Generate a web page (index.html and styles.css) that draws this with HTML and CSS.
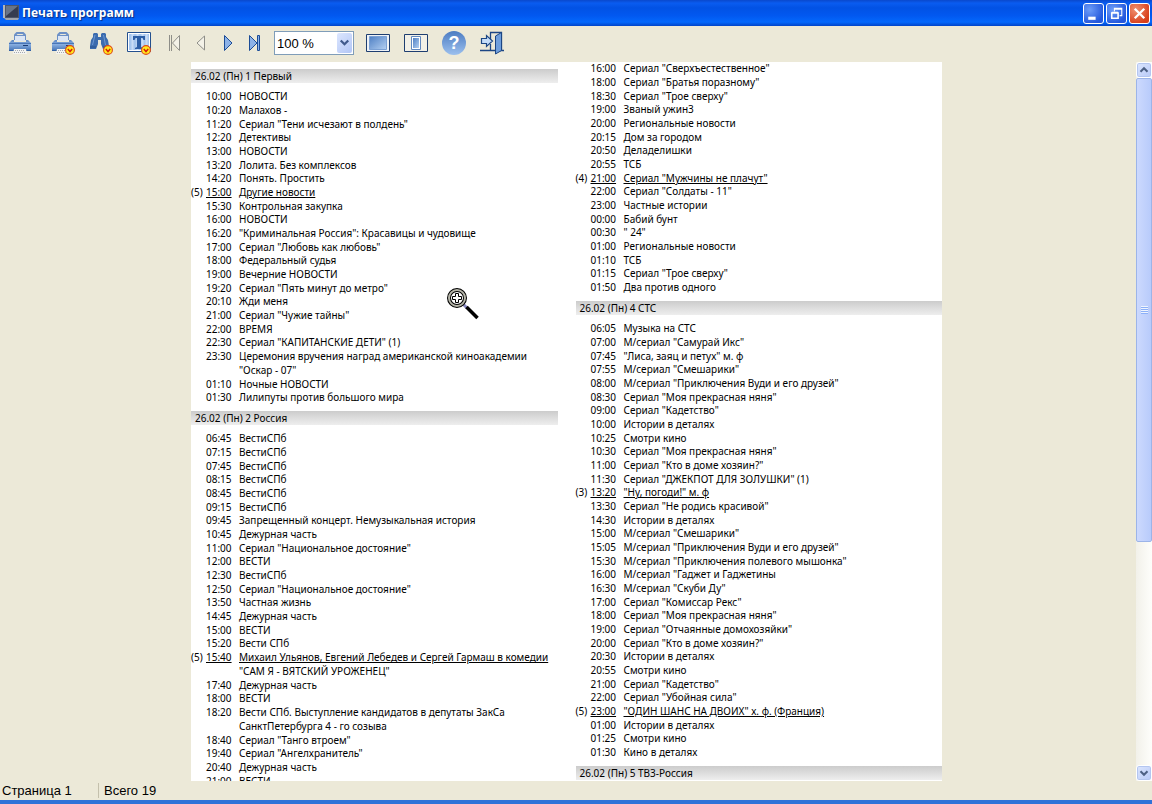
FILE: index.html
```html
<!DOCTYPE html>
<html lang="ru">
<head>
<meta charset="utf-8">
<title>Печать программ</title>
<link rel="stylesheet" href="styles.css">
</head>
<body>
<svg class="defs" aria-hidden="true">
  <defs>
    <linearGradient id="blue" x1="0" y1="0" x2="1" y2="1"><stop offset="0" stop-color="#4f80c4"/><stop offset="1" stop-color="#b4d0f2"/></linearGradient>
    <linearGradient id="blueV" x1="0" y1="0" x2="0" y2="1"><stop offset="0" stop-color="#5a86c4"/><stop offset="0.400" stop-color="#88aee0"/><stop offset="1" stop-color="#4070b4"/></linearGradient>
    <symbol id="printer" viewBox="0 0 24 24">
      <path d="M6 9V3.500L8.500 1h7L18 3.500V9z" fill="#6c90c6"/>
      <path d="M9.500 3h5l1 1h-7z" fill="#ece9d8"/>
      <path d="M7 5h10v5H7z" fill="#dce6f4"/>
      <path d="M1 12l3-3h2v2h12V9h2l3 3v8H1z" fill="url(#blueV)"/>
      <path d="M1 12.500h22" stroke="#4a76b6"/>
      <path d="M15 14.500h5" stroke="#1c3c74"/>
      <path d="M1 19.500h22" stroke="#3260a4"/>
      <path d="M6 18h12l1 5H5z" fill="#f4f4f0"/>
      <path d="M7 19.500h10M6 21.500h12" stroke="#a4aab4" stroke-dasharray="1 1"/>
    </symbol>
    <symbol id="badge" viewBox="0 0 10 10">
      <circle cx="5" cy="5" r="4.400" fill="#ffe81c" stroke="#e04a14" stroke-width="1.100"/>
      <path d="M2.800 4L5 6.500 7.200 4" fill="none" stroke="#d81c08" stroke-width="1.500"/>
    </symbol>
  </defs>
</svg>
<div class="window">
  <header class="titlebar">
    <svg class="app-icon" viewBox="0 0 16 16" aria-hidden="true">
      <path d="M0 0h2v13H0z" fill="#b0b4bc"/><path d="M2 0h14v13H2z" fill="#4e5668"/><path d="M3 1h12v11H3z" fill="#353c50"/><path d="M3 1h12L3 11z" fill="#687488"/><path d="M1 13h15l-1 2H3z" fill="#9ea4ae"/>
    </svg>
    <h1 class="title">Печать программ</h1>
    <div class="window-buttons">
      <button class="win-btn" type="button" aria-label="Свернуть"><svg viewBox="0 0 18 18"><path d="M4 12h7v3H4z" fill="#fff"/></svg></button>
      <button class="win-btn" type="button" aria-label="Восстановить"><svg viewBox="0 0 18 18"><path d="M7 7V4h7v7h-2M7 5h7" fill="none" stroke="#fff"/><path d="M4.500 8.500h6v5h-6zM4.500 8h6" fill="none" stroke="#fff" stroke-width="1.500"/></svg></button>
      <button class="win-btn close" type="button" aria-label="Закрыть"><svg viewBox="0 0 18 18"><path d="M4.500 4.500l9 9M13.500 4.500l-9 9" stroke="#fff" stroke-width="2.200"/></svg></button>
    </div>
  </header>

  <div class="toolbar" role="toolbar" aria-label="Просмотр">
    <button class="tool print" type="button" aria-label="Печать"><svg viewBox="0 0 24 24"><use href="#printer" width="24" height="24"/></svg></button>
    <button class="tool" type="button" aria-label="Настройка печати"><svg viewBox="0 0 24 24"><use href="#printer" width="24" height="24"/><use href="#badge" x="14" y="14" width="10" height="10"/></svg></button>
    <button class="tool" type="button" aria-label="Поиск"><svg viewBox="0 0 24 24">
      <path d="M4 3l1-1h3l1 1v3h3V3l1-1h3l1 1v3l2 3 1 6v3h-6l-2-5V9h-3v4l-2 5H1v-3l1-6 2-3z" fill="#3c6cae"/>
      <path d="M6 4L3.500 14M14.500 4l2 10" stroke="#6c98d4"/>
      <path d="M1 16h6M14 16h6" stroke="#28528e"/>
      <use href="#badge" x="14" y="14" width="10" height="10"/></svg></button>
    <button class="tool" type="button" aria-label="Текст"><svg viewBox="0 0 24 24">
      <path d="M.5 1.500h23v19H.5z" fill="#fff" stroke="#24508e"/><path d="M2 3h20v16H2z" fill="#a6c6ee"/>
      <path d="M5.500 3v16M10.500 3v16M15.500 3v16M19.500 3v16" stroke="#c8dcf6" stroke-width="2"/>
      <path d="M6 5h12v4h-1.500l-1-2H14v9l2 1v1H8v-1l2-1V7H8.500l-1 2H6z" fill="#2c5ea6"/>
      <use href="#badge" x="14" y="14" width="10" height="10"/></svg></button>
    <div class="nav">
      <button class="step" type="button" disabled aria-label="Первая страница"><svg viewBox="0 0 14 20"><path d="M2.500 2v16M4.500 2v16M12.500 2.500v15L5.500 10z" fill="#f4f2e8" stroke="#8e8e88"/></svg></button>
      <button class="step" type="button" disabled aria-label="Предыдущая страница"><svg viewBox="0 0 14 20"><path d="M10.500 3v14L3 10z" fill="#f4f2e8" stroke="#8e8e88"/></svg></button>
      <button class="step" type="button" aria-label="Следующая страница"><svg viewBox="0 0 14 20"><path d="M3.500 2.500v15L11 10z" fill="#8cb2e8" stroke="#1c4c96"/></svg></button>
      <button class="step" type="button" aria-label="Последняя страница"><svg viewBox="0 0 14 20"><path d="M1.500 2.500v15L9 10z" fill="#8cb2e8" stroke="#1c4c96"/><path d="M9.500 2.500h2v15h-2z" fill="#8cb2e8" stroke="#1c4c96"/></svg></button>
    </div>
    <div class="zoom">
      <select class="zoom-select" aria-label="Масштаб"><option>100 %</option></select>
      <span class="zoom-arrow"><svg viewBox="0 0 16 20" aria-hidden="true"><path d="M4 8l4 4 4-4" fill="none" stroke="#405a8c" stroke-width="2.400"/></svg></span>
    </div>
    <button class="tool" type="button" aria-label="По ширине"><svg viewBox="0 0 24 24"><path d="M.5 3.500h23v17H.5z" fill="#eef2f6" stroke="#1e3e70"/><path d="M3.500 5.500h17v13h-17z" fill="url(#blue)" stroke="#7aa0d4"/></svg></button>
    <button class="tool" type="button" aria-label="Страница целиком"><svg viewBox="0 0 24 24"><path d="M.5 3.500h23v17H.5z" fill="#f2f0e6" stroke="#1e3e70"/><path d="M7.500 5.500h9v13h-9z" fill="#fff" stroke="#6088c0"/><path d="M9 7h6v10H9z" fill="url(#blue)"/></svg></button>
    <button class="tool help" type="button" aria-label="Справка">?</button>
    <button class="tool" type="button" aria-label="Выход"><svg viewBox="0 0 24 24"><path d="M0 19.500h24M10.500 8V1.500h11v18M10.500 19v-6" fill="none" stroke="#1c4684" stroke-width="1.300"/><path d="M21.500 1.500l-6 3.500V23l6-3.500z" fill="#6f9edc" stroke="#1c4684"/><path d="M1.500 7.500h5v-3l6 5.500-6 5.500v-3h-5V10z" fill="#c4dcf8" stroke="#1c4684" stroke-width="1.200"/></svg></button>
  </div>

  <div class="workspace">
    <main class="canvas">
      <article class="sheet">
        <div class="column">
          <h2 class="channel">26.02 (Пн) 1 Первый</h2>
          <ul class="schedule">
            <li><time>10:00</time><span>НОВОСТИ</span></li>
            <li><time>10:20</time><span>Малахов -</span></li>
            <li><time>11:20</time><span>Сериал "Тени исчезают в полдень"</span></li>
            <li><time>12:20</time><span>Детективы</span></li>
            <li><time>13:00</time><span>НОВОСТИ</span></li>
            <li><time>13:20</time><span>Лолита. Без комплексов</span></li>
            <li><time>14:20</time><span>Понять. Простить</span></li>
            <li><b>(5)</b><time><u>15:00</u></time><span><u>Другие новости</u></span></li>
            <li><time>15:30</time><span>Контрольная закупка</span></li>
            <li><time>16:00</time><span>НОВОСТИ</span></li>
            <li><time>16:20</time><span>"Криминальная Россия": Красавицы и чудовище</span></li>
            <li><time>17:00</time><span>Сериал "Любовь как любовь"</span></li>
            <li><time>18:00</time><span>Федеральный судья</span></li>
            <li><time>19:00</time><span>Вечерние НОВОСТИ</span></li>
            <li><time>19:20</time><span>Сериал "Пять минут до метро"</span></li>
            <li><time>20:10</time><span>Жди меня</span></li>
            <li><time>21:00</time><span>Сериал "Чужие тайны"</span></li>
            <li><time>22:00</time><span>ВРЕМЯ</span></li>
            <li><time>22:30</time><span>Сериал "КАПИТАНСКИЕ ДЕТИ" (1)</span></li>
            <li><time>23:30</time><span>Церемония вручения наград американской киноакадемии<br>"Оскар - 07"</span></li>
            <li><time>01:10</time><span>Ночные НОВОСТИ</span></li>
            <li><time>01:30</time><span>Лилипуты против большого мира</span></li>
          </ul>
          <h2 class="channel">26.02 (Пн) 2 Россия</h2>
          <ul class="schedule">
            <li><time>06:45</time><span>ВестиСПб</span></li>
            <li><time>07:15</time><span>ВестиСПб</span></li>
            <li><time>07:45</time><span>ВестиСПб</span></li>
            <li><time>08:15</time><span>ВестиСПб</span></li>
            <li><time>08:45</time><span>ВестиСПб</span></li>
            <li><time>09:15</time><span>ВестиСПб</span></li>
            <li><time>09:45</time><span>Запрещенный концерт. Немузыкальная история</span></li>
            <li><time>10:45</time><span>Дежурная часть</span></li>
            <li><time>11:00</time><span>Сериал "Национальное достояние"</span></li>
            <li><time>12:00</time><span>ВЕСТИ</span></li>
            <li><time>12:30</time><span>ВестиСПб</span></li>
            <li><time>12:50</time><span>Сериал "Национальное достояние"</span></li>
            <li><time>13:50</time><span>Частная жизнь</span></li>
            <li><time>14:45</time><span>Дежурная часть</span></li>
            <li><time>15:00</time><span>ВЕСТИ</span></li>
            <li><time>15:20</time><span>Вести СПб</span></li>
            <li><b>(5)</b><time><u>15:40</u></time><span><u>Михаил Ульянов, Евгений Лебедев и Сергей Гармаш в комедии</u><br>"САМ Я - ВЯТСКИЙ УРОЖЕНЕЦ"</span></li>
            <li><time>17:40</time><span>Дежурная часть</span></li>
            <li><time>18:00</time><span>ВЕСТИ</span></li>
            <li><time>18:20</time><span>Вести СПб. Выступление кандидатов в депутаты ЗакСа<br>СанктПетербурга 4 - го созыва</span></li>
            <li><time>18:40</time><span>Сериал "Танго втроем"</span></li>
            <li><time>19:40</time><span>Сериал "Ангелхранитель"</span></li>
            <li><time>20:40</time><span>Дежурная часть</span></li>
            <li><time>21:00</time><span>ВЕСТИ</span></li>
          </ul>
        </div>
        <div class="column">
          <ul class="schedule">
            <li><time>16:00</time><span>Сериал "Сверхъестественное"</span></li>
            <li><time>18:00</time><span>Сериал "Братья поразному"</span></li>
            <li><time>18:30</time><span>Сериал "Трое сверху"</span></li>
            <li><time>19:00</time><span>Званый ужин3</span></li>
            <li><time>20:00</time><span>Региональные новости</span></li>
            <li><time>20:15</time><span>Дом за городом</span></li>
            <li><time>20:50</time><span>Деладелишки</span></li>
            <li><time>20:55</time><span>ТСБ</span></li>
            <li><b>(4)</b><time><u>21:00</u></time><span><u>Сериал "Мужчины не плачут"</u></span></li>
            <li><time>22:00</time><span>Сериал "Солдаты - 11"</span></li>
            <li><time>23:00</time><span>Частные истории</span></li>
            <li><time>00:00</time><span>Бабий бунт</span></li>
            <li><time>00:30</time><span>" 24"</span></li>
            <li><time>01:00</time><span>Региональные новости</span></li>
            <li><time>01:10</time><span>ТСБ</span></li>
            <li><time>01:15</time><span>Сериал "Трое сверху"</span></li>
            <li><time>01:50</time><span>Два против одного</span></li>
          </ul>
          <h2 class="channel">26.02 (Пн) 4 СТС</h2>
          <ul class="schedule">
            <li><time>06:05</time><span>Музыка на СТС</span></li>
            <li><time>07:00</time><span>М/сериал "Самурай Икс"</span></li>
            <li><time>07:45</time><span>"Лиса, заяц и петух" м. ф</span></li>
            <li><time>07:55</time><span>М/сериал "Смешарики"</span></li>
            <li><time>08:00</time><span>М/сериал "Приключения Вуди и его друзей"</span></li>
            <li><time>08:30</time><span>Сериал "Моя прекрасная няня"</span></li>
            <li><time>09:00</time><span>Сериал "Кадетство"</span></li>
            <li><time>10:00</time><span>Истории в деталях</span></li>
            <li><time>10:25</time><span>Смотри кино</span></li>
            <li><time>10:30</time><span>Сериал "Моя прекрасная няня"</span></li>
            <li><time>11:00</time><span>Сериал "Кто в доме хозяин?"</span></li>
            <li><time>11:30</time><span>Сериал "ДЖЕКПОТ ДЛЯ ЗОЛУШКИ" (1)</span></li>
            <li><b>(3)</b><time><u>13:20</u></time><span><u>"Ну, погоди!" м. ф</u></span></li>
            <li><time>13:30</time><span>Сериал "Не родись красивой"</span></li>
            <li><time>14:30</time><span>Истории в деталях</span></li>
            <li><time>15:00</time><span>М/сериал "Смешарики"</span></li>
            <li><time>15:05</time><span>М/сериал "Приключения Вуди и его друзей"</span></li>
            <li><time>15:30</time><span>М/сериал "Приключения полевого мышонка"</span></li>
            <li><time>16:00</time><span>М/сериал "Гаджет и Гаджетины</span></li>
            <li><time>16:30</time><span>М/сериал "Скуби Ду"</span></li>
            <li><time>17:00</time><span>Сериал "Комиссар Рекс"</span></li>
            <li><time>18:00</time><span>Сериал "Моя прекрасная няня"</span></li>
            <li><time>19:00</time><span>Сериал "Отчаянные домохозяйки"</span></li>
            <li><time>20:00</time><span>Сериал "Кто в доме хозяин?"</span></li>
            <li><time>20:30</time><span>Истории в деталях</span></li>
            <li><time>20:55</time><span>Смотри кино</span></li>
            <li><time>21:00</time><span>Сериал "Кадетство"</span></li>
            <li><time>22:00</time><span>Сериал "Убойная сила"</span></li>
            <li><b>(5)</b><time><u>23:00</u></time><span><u>"ОДИН ШАНС НА ДВОИХ" х. ф. (Франция)</u></span></li>
            <li><time>01:00</time><span>Истории в деталях</span></li>
            <li><time>01:25</time><span>Смотри кино</span></li>
            <li><time>01:30</time><span>Кино в деталях</span></li>
          </ul>
          <h2 class="channel">26.02 (Пн) 5 ТВ3-Россия</h2>
        </div>
        <svg class="magnifier" viewBox="0 0 34 34" aria-hidden="true">
          <path d="M17 17l4 4" stroke="#8888c0" stroke-width="3"/>
          <path d="M20.500 20l11 11" stroke="#000" stroke-width="3.500"/>
          <circle cx="11" cy="11" r="8" fill="#fff" stroke="#000" stroke-width="4"/>
          <circle cx="11" cy="11" r="8" fill="none" stroke="#b4b4a8" stroke-width="2"/>
          <path d="M9.500 6.500h3v3h3v3h-3v3h-3v-3h-3v-3h3z" fill="#fff" stroke="#000"/>
        </svg>
      </article>
    </main>
    <div class="scrollbar">
      <button class="scroll-btn" type="button" aria-label="Вверх"><svg viewBox="0 0 16 16"><path d="M4 10l4-4 4 4" fill="none" stroke="#4d6185" stroke-width="2.400"/></svg></button>
      <div class="track"><div class="thumb"><span class="grip"></span></div></div>
      <button class="scroll-btn" type="button" aria-label="Вниз"><svg viewBox="0 0 16 16"><path d="M4 6l4 4 4-4" fill="none" stroke="#4d6185" stroke-width="2.400"/></svg></button>
    </div>
  </div>

  <footer class="statusbar">
    <span class="status-page">Страница 1</span>
    <span class="status-total">Всего 19</span>
  </footer>
</div>
</body>
</html>
```
FILE: styles.css
```css
* { box-sizing: border-box; }

body {
  margin: 0;
  font-family: "Liberation Sans", Arial, sans-serif;
  color: #000;
}

button { font: inherit; border: 0; padding: 0; background: none; }
svg { display: block; }
.defs { position: absolute; width: 0; height: 0; }

.window {
  display: flex;
  flex-direction: column;
  height: 100vh;
  background: #ece9d8;
  border-bottom: 4px solid #2f72d8;
  overflow: hidden;
}

/* Title bar */
.titlebar {
  display: flex;
  align-items: center;
  flex: none;
  height: 26px;
  padding: 0 2px 0 3px;
  background: linear-gradient(#0a48cc 0, #0a5cf0 12%, #0252e4 30%, #0258f0 60%, #0468fc 85%, #0244c8 100%);
}
.app-icon { width: 16px; height: 16px; }
.title {
  flex: 1;
  margin: 0 0 0 3px;
  color: #fff;
  font: bold 12px/20px "Open Sans", "Noto Sans", sans-serif;
  text-shadow: 1px 1px 1px #0a2c80;
}
.window-buttons { display: flex; gap: 2px; }
.win-btn {
  width: 21px;
  height: 21px;
  border: 1px solid #fff;
  border-radius: 3px;
  background: radial-gradient(circle at 30% 30%, #6c9cf8, #2458dc 75%);
}
.win-btn.close { background: radial-gradient(circle at 30% 30%, #f09070, #d8401c 75%); }

/* Toolbar */
.toolbar {
  display: flex;
  align-items: center;
  flex: none;
  height: 36px;
  padding: 0 1px 2px;
}
.tool {
  display: grid;
  place-items: center;
  width: 38px;
  height: 30px;
}
.tool svg { width: 24px; height: 24px; }
.tool.print { margin-right: 5px; }
.nav { display: flex; margin: 0 6px 0 2px; }
.step {
  display: grid;
  place-items: center;
  width: 27px;
  height: 30px;
}
.step svg { width: 14px; height: 20px; }
.zoom { position: relative; width: 80px; margin-right: 5px; }
.zoom-select {
  display: block;
  appearance: none;
  width: 100%;
  height: 24px;
  padding: 0 2px;
  border: 1px solid #7f9db9;
  border-radius: 0;
  background: #fff;
  color: #000;
  font: 13px "Liberation Sans", Arial, sans-serif;
}
.zoom-arrow {
  position: absolute;
  top: 2px;
  right: 2px;
  width: 15px;
  height: 20px;
  border-radius: 2px;
  background: linear-gradient(135deg, #dce6fe, #b2c6f6);
  pointer-events: none;
}
.help {
  width: 24px;
  height: 24px;
  margin: 0 7px;
  border-radius: 50%;
  background: linear-gradient(#4c7cc2, #9cc0ee);
  color: #fff;
  font-size: 18px;
  font-weight: bold;
}

/* Document area */
.workspace { display: flex; flex: 1; min-height: 0; }
.canvas { flex: 1; min-width: 0; padding-right: 3px; overflow: hidden; }
.sheet {
  position: relative;
  display: grid;
  grid-template-columns: 1fr 1fr;
  gap: 18px;
  max-width: 751px;
  min-height: 100%;
  margin: 0 auto;
  background: #fff;
  font-family: "Noto Sans", "Liberation Sans", sans-serif;
  font-size: 10px;
}
.channel {
  margin: 7px 0;
  padding: 0 4px;
  background: linear-gradient(#cccccc, #eeeeee);
  font-size: 10px;
  font-weight: normal;
  line-height: 14px;
}
.schedule { margin: 0; padding: 0; list-style: none; }
.schedule li {
  display: grid;
  grid-template-columns: 15px 33px 1fr;
  line-height: 14px;
  white-space: nowrap;
}
.schedule li:nth-child(3n + 1) { line-height: 13px; }
.schedule b { font-weight: normal; }
.schedule time { grid-column: 2; }
.schedule u { text-underline-offset: 1px; }
.magnifier {
  position: absolute;
  left: 255px;
  top: 225px;
  width: 34px;
  height: 34px;
}

/* Scroll bar */
.scrollbar {
  display: flex;
  flex-direction: column;
  flex: none;
  width: 16px;
  background: linear-gradient(90deg, #f2f1ea, #fefefb);
}
.scroll-btn {
  flex: none;
  height: 16px;
  border: 1px solid #fff;
  border-radius: 3px;
  box-shadow: inset 0 0 0 1px #b4c6f0;
  background: linear-gradient(135deg, #dce6fe, #b8caf8);
}
.scroll-btn svg { width: 14px; height: 14px; }
.track { flex: 1; }
.thumb {
  display: grid;
  place-items: center;
  height: 67.5%;
  border: 1px solid #9cb4e8;
  border-radius: 2px;
  background: linear-gradient(90deg, #ccd9fe, #b8cbfb);
}
.grip {
  width: 7px;
  height: 8px;
  background: repeating-linear-gradient(#eef4fe 0 1px, #8cb0f8 1px 2px);
}

/* Status bar */
.statusbar {
  display: flex;
  align-items: center;
  flex: none;
  height: 19px;
  font-size: 13px;
  line-height: 15px;
}
.status-page { width: 99px; padding-left: 2px; border-right: 1px solid #c4c0ac; }
.status-total { padding-left: 5px; }
```
